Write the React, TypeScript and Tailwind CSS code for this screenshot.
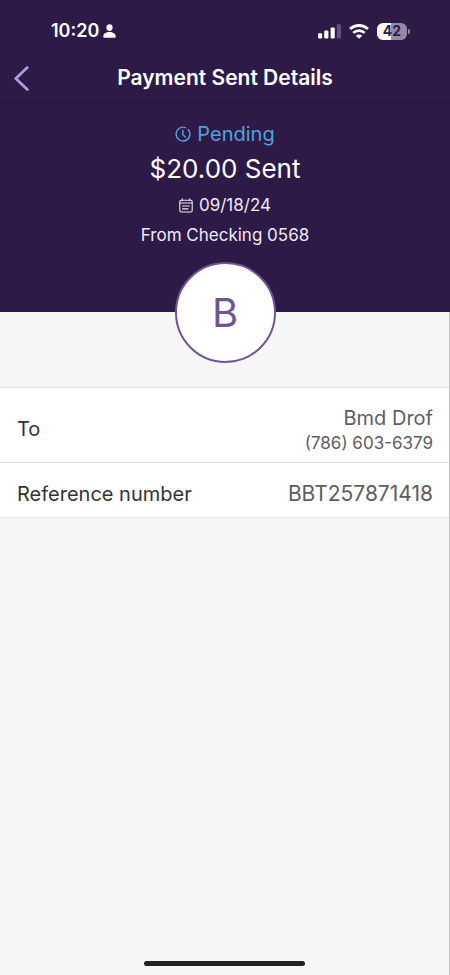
import type { ReactNode } from "react";

const payment = {
  status: "Pending",
  amount: "$20.00 Sent",
  date: "09/18/24",
  source: "From Checking 0568",
  recipient: { initial: "B", name: "Bmd Drof", phone: "(786) 603-6379" },
  reference: "BBT257871418",
};

function PersonIcon() {
  return (
    <svg className="h-[14px] w-[13px]" viewBox="0 0 13 14" fill="currentColor" aria-hidden="true">
      <ellipse cx="6.5" cy="3.6" rx="3.1" ry="3.4" />
      <path d="M0.3 12.4C0.3 9.8 3 8.1 6.5 8.1s6.2 1.7 6.2 4.3c0 .9-.5 1.4-1.4 1.4H1.7c-.9 0-1.4-.5-1.4-1.4Z" />
    </svg>
  );
}

function SignalIcon() {
  return (
    <svg className="h-[15px] w-[23px]" viewBox="0 0 23 15" fill="currentColor" aria-hidden="true">
      <rect x="0" y="9.3" width="4.2" height="5.2" rx="1.1" />
      <rect x="6.2" y="6.6" width="4.2" height="7.9" rx="1.1" />
      <rect x="12.6" y="3.4" width="4.2" height="11.1" rx="1.1" />
      <rect x="18.8" y="0.3" width="4.2" height="14.2" rx="1.1" opacity="0.25" />
    </svg>
  );
}

function WifiIcon() {
  return (
    <svg className="h-[15px] w-5" viewBox="0 0 20 15" fill="none" aria-hidden="true">
      <path d="M1.1 5.1a12.8 12.8 0 0 1 17.8 0" stroke="currentColor" strokeWidth="2.8" />
      <path d="M4.3 8.9a8.1 8.1 0 0 1 11.4 0" stroke="currentColor" strokeWidth="2.7" />
      <path d="M10 14.8 6.8 11.8a4.6 4.6 0 0 1 6.4 0Z" fill="currentColor" />
    </svg>
  );
}

function Battery() {
  return (
    <div className="flex items-center gap-px">
      <div className="flex h-[17px] w-[30px] items-center justify-center rounded-md bg-linear-to-r from-white from-45% to-[#9789a6] to-45% text-sm font-bold text-[#2d1a47]">
        42
      </div>
      <div className="h-[5px] w-[2px] rounded-r-full bg-[#9789a6]" />
    </div>
  );
}

function ClockIcon() {
  return (
    <svg
      className="h-4 w-4"
      viewBox="0 0 16 16"
      fill="none"
      stroke="currentColor"
      strokeWidth="1.4"
      strokeLinecap="round"
      strokeLinejoin="round"
      aria-hidden="true"
    >
      <path d="M10.4 1.6A6.9 6.9 0 1 0 13.2 3.5" />
      <path d="M7.8 4.2v4.2l2.5 2.5" />
    </svg>
  );
}

function CalendarIcon() {
  return (
    <svg
      className="h-[15px] w-[14px]"
      viewBox="0 0 14 15"
      fill="none"
      stroke="currentColor"
      strokeWidth="1.1"
      strokeLinecap="round"
      aria-hidden="true"
    >
      <rect x="0.8" y="2.2" width="12.4" height="11.8" rx="1.4" />
      <path d="M1 5h12M3.2 0.8v1.8M10.8 0.8v1.8M3.6 8h6.8M3.6 10.9h5.4" />
    </svg>
  );
}

function StatusBar() {
  return (
    <div className="flex h-[54px] items-center justify-between pt-2 pr-10 pl-[51px]">
      <div className="flex items-center gap-1 text-lg font-semibold">
        10:20
        <PersonIcon />
      </div>
      <div className="flex items-center gap-2">
        <SignalIcon />
        <WifiIcon />
        <Battery />
      </div>
    </div>
  );
}

function NavBar() {
  return (
    <nav className="grid h-[49px] grid-cols-[44px_1fr_44px] items-center border-b border-[#28153f]">
      <button type="button" aria-label="Back" className="flex h-11 items-center pl-[14px] text-[#aa9be0]">
        <svg
          className="h-[25px] w-[15px]"
          viewBox="0 0 15 25"
          fill="none"
          stroke="currentColor"
          strokeWidth="2.8"
          strokeLinecap="round"
          strokeLinejoin="round"
        >
          <path d="M13.3 1.6 1.8 12.5l11.5 10.9" />
        </svg>
      </button>
      <h1 className="text-center text-[21px] font-semibold">Payment Sent Details</h1>
    </nav>
  );
}

function DetailRow({ label, children }: { label: string; children: ReactNode }) {
  return (
    <div className="flex items-center justify-between border-b border-[#e6e6e6] pt-4 pr-4 pb-2 pl-[17px]">
      <dt className="text-[#333333]">{label}</dt>
      <dd className="text-right text-[#5e5e5e]">{children}</dd>
    </div>
  );
}

export default function App() {
  return (
    <div className="flex min-h-screen flex-col border-r border-[#c4c4c4] bg-[#f6f6f6] font-['Inter','Liberation_Sans',sans-serif]">
      <header className="-mr-px bg-[#2d1a47] text-white">
        <StatusBar />
        <NavBar />
        <div className="flex flex-col items-center pt-[17px] pb-[62px]">
          <p className="flex items-center gap-[6px] text-xl leading-7 text-[#4fa3dc]">
            <ClockIcon />
            {payment.status}
          </p>
          <p className="text-[26px] leading-[42px]">{payment.amount}</p>
          <p className="flex items-center gap-[6px] text-[17px] leading-[30px] text-[#f1e9f5]">
            <CalendarIcon />
            {payment.date}
          </p>
          <p className="text-[17px] leading-[30px] text-[#f1e9f5]">{payment.source}</p>
        </div>
      </header>
      <main className="-mr-px flex-1">
        <div className="relative mx-auto -mt-[50px] mb-6 flex size-[101px] items-center justify-center rounded-full border-2 border-[#6f5497] bg-white text-[40px] text-[#6f5497]">
          {payment.recipient.initial}
        </div>
        <dl className="mr-px border-t border-[#e6e6e6] bg-white text-xl leading-[30px]">
          <DetailRow label="To">
            <p className="leading-7">{payment.recipient.name}</p>
            <p className="text-[17px] leading-[22px]">{payment.recipient.phone}</p>
          </DetailRow>
          <DetailRow label="Reference number">
            <span className="text-[21px]">{payment.reference}</span>
          </DetailRow>
        </dl>
      </main>
      <footer className="flex justify-center pb-[9px]">
        <div className="h-[5px] w-[161px] rounded-full bg-[#222222]" />
      </footer>
    </div>
  );
}
